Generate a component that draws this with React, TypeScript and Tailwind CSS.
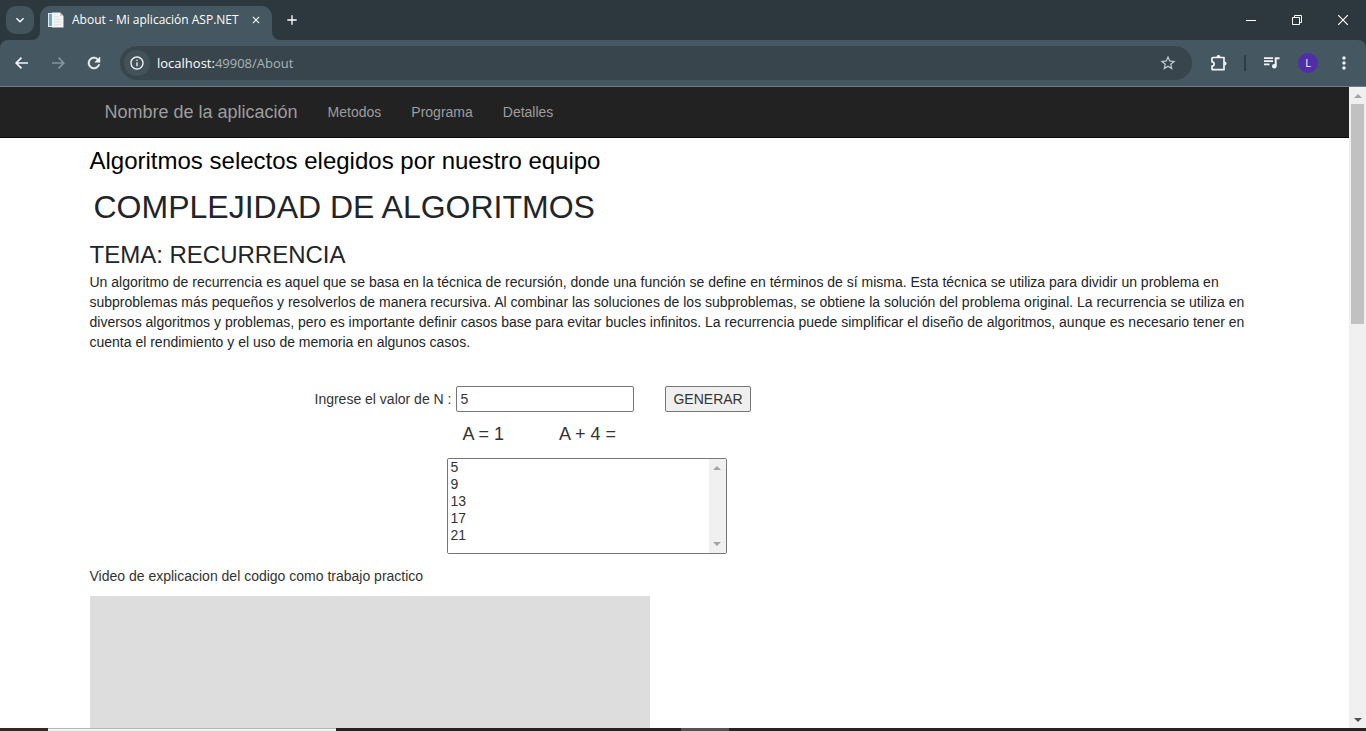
import { useState } from "react";
import { MdAdd, MdClose, MdInfoOutline, MdKeyboardArrowDown, MdMoreVert, MdStarBorder } from "react-icons/md";

function PageIcon() {
  return (
    <svg width="16" height="16" viewBox="0 0 16 16" aria-hidden="true">
      <rect x="0" y="1" width="9" height="14" fill="#dfeaf0" />
      <rect x="1" y="2" width="3" height="12" fill="#6ea9c4" />
      <path d="M4 0.5h8l3.5 3.5v11.5H4z" fill="#f4f4f2" />
      <path d="M12 0.5v3.500h3.500z" fill="#c9cdd0" />
      <path d="M6 5h5M6 7.500h7M6 10h7M6 12.500h7" stroke="#dde2e4" strokeWidth="1" />
    </svg>
  );
}

function HistoryArrow({ forward }: { forward?: boolean }) {
  return (
    <svg width="16" height="16" viewBox="0 0 16 16" fill="none" stroke="currentColor" strokeWidth="1.700" aria-hidden="true">
      <path d={forward ? "M2 8h11.500M8.500 2.700L13.800 8L8.500 13.300" : "M14 8H2.500M7.500 2.700L2.200 8L7.500 13.300"} />
    </svg>
  );
}

function ReloadIcon() {
  return (
    <svg width="18" height="18" viewBox="0 0 24 24" fill="currentColor" aria-hidden="true">
      <path
        d="M17.650 6.350A7.958 7.958 0 0 0 12 4c-4.420 0-7.990 3.580-7.990 8s3.570 8 7.990 8c3.730 0 6.840-2.550 7.730-6h-2.080A5.990 5.990 0 0 1 12 18c-3.310 0-6-2.690-6-6s2.690-6 6-6c1.660 0 3.140.69 4.220 1.780L13 11h7V4l-2.350 2.350z"
        stroke="currentColor"
        strokeWidth="0.600"
      />
    </svg>
  );
}

function ExtensionIcon() {
  return (
    <svg width="18" height="18" viewBox="0 0 18 18" fill="none" aria-hidden="true">
      <path
        d="M2.800 3.500h11.200v12.200H2.800a0.800 0.800 0 0 1-0.800-0.800v-2.900a2.100 2.100 0 0 0 0-4.200V4.300a0.800 0.800 0 0 1 0.800-0.800z"
        stroke="#f1f5f7"
        strokeWidth="1.700"
        strokeLinejoin="round"
      />
      <path d="M6.500 3a2 2 0 0 1 4 0z" fill="#f1f5f7" />
      <path d="M14.500 7.500a2 2 0 0 1 0 4z" fill="#f1f5f7" />
    </svg>
  );
}

function MediaIcon() {
  return (
    <svg width="16" height="14" viewBox="0 0 16 14" fill="none" stroke="#f1f5f7" strokeWidth="1.700" aria-hidden="true">
      <path d="M0 2.200h9M0 5.200h9M0 8.300h5.500" />
      <path d="M11.700 10V2.200H15.500" strokeWidth="2" />
      <circle cx="10.300" cy="10.200" r="2.300" fill="#f1f5f7" stroke="none" />
    </svg>
  );
}

function Arrow({ up, color }: { up?: boolean; color: string }) {
  return (
    <svg width="8" height="4" viewBox="0 0 8 4" aria-hidden="true">
      <path d={up ? "M0 4L4 0L8 4z" : "M0 0L4 4L8 0z"} fill={color} />
    </svg>
  );
}

function TabStrip() {
  return (
    <div className="flex h-10 shrink-0 items-end bg-[#2d383e]">
      <button
        aria-label="Buscar pestañas"
        className="mb-1.5 ml-1.5 flex size-7 items-center justify-center rounded-[10px] bg-[#43545d] text-white"
      >
        <MdKeyboardArrowDown size={16} />
      </button>
      <div className="relative ml-1.5 flex h-[34px] w-58 items-center rounded-t-[10px] bg-[#455760] px-2 pb-1.5">
        <svg className="absolute bottom-0 -left-2" width="8" height="8" viewBox="0 0 8 8" aria-hidden="true">
          <path d="M8 0v8H0a8 8 0 0 0 8-8z" fill="#455760" />
        </svg>
        <svg className="absolute -right-2 bottom-0" width="8" height="8" viewBox="0 0 8 8" aria-hidden="true">
          <path d="M0 0v8h8a8 8 0 0 1-8-8z" fill="#455760" />
        </svg>
        <PageIcon />
        <span className="ml-2 flex-1 truncate text-xs text-white">About - Mi aplicación ASP.NET</span>
        <button aria-label="Cerrar pestaña" className="flex size-4 items-center justify-center text-white">
          <MdClose size={12} />
        </button>
      </div>
      <button aria-label="Nueva pestaña" className="mb-2.5 ml-3 flex h-5 items-center text-white">
        <MdAdd size={16} />
      </button>
      <div className="ml-auto flex h-full items-center text-white">
        <button aria-label="Minimizar" className="flex w-[46px] justify-center">
          <svg width="10" height="10" viewBox="0 0 10 10" stroke="currentColor">
            <path d="M0 5.500h10" />
          </svg>
        </button>
        <button aria-label="Restaurar" className="flex w-[46px] justify-center">
          <svg width="10" height="10" viewBox="0 0 10 10" fill="none" stroke="currentColor">
            <path d="M0.500 2.500h7v7h-7zM2.500 2.500v-2h7v7h-2" />
          </svg>
        </button>
        <button aria-label="Cerrar" className="flex w-[46px] justify-center">
          <svg width="10" height="10" viewBox="0 0 10 10" stroke="currentColor" strokeWidth="1.200">
            <path d="M0 0l10 10M10 0L0 10" />
          </svg>
        </button>
      </div>
    </div>
  );
}

function Toolbar() {
  return (
    <div className="shrink-0 bg-[#2d383e]">
      <div className="flex h-[47px] items-center rounded-t-lg border-b border-[#6f7d84] bg-[#455760] pr-3 pl-3.5 text-[#f1f5f7]">
        <button aria-label="Atrás">
          <HistoryArrow />
        </button>
        <button aria-label="Adelante" className="ml-5 text-[#87949b]">
          <HistoryArrow forward />
        </button>
        <button aria-label="Recargar" className="ml-[19px]">
          <ReloadIcon />
        </button>
        <div className="ml-[17px] flex h-[34px] flex-1 items-center rounded-full bg-[#38454c] pr-[15px] pl-1">
          <button
            aria-label="Información del sitio"
            className="flex size-[26px] items-center justify-center rounded-full bg-[#43525a]"
          >
            <MdInfoOutline size={16} />
          </button>
          <span className="ml-[7px] flex-1 text-[13px] leading-5 text-[#a9b4b9]">
            <span className="text-white">localhost:</span>49908/About
          </span>
          <button aria-label="Añadir a marcadores" className="text-[#c5cfd4]">
            <MdStarBorder size={18} />
          </button>
        </div>
        <button aria-label="Extensiones" className="ml-[18px]">
          <ExtensionIcon />
        </button>
        <span className="ml-4 h-4 w-0.5 bg-[#2f3d45]" />
        <button aria-label="Contenido multimedia" className="ml-[18px]">
          <MediaIcon />
        </button>
        <button
          aria-label="Perfil"
          className="ml-[18px] flex size-5 items-center justify-center rounded-full bg-[#512da8] text-[11px] text-white"
        >
          L
        </button>
        <button aria-label="Menú" className="ml-4">
          <MdMoreVert size={20} />
        </button>
      </div>
    </div>
  );
}

function NavBar() {
  return (
    <nav className="h-[51px] border-b border-[#080808] bg-[#222222]">
      <div className="mx-auto flex h-[50px] max-w-[1170px] items-center px-[15px] text-[#9d9d9d]">
        <a href="#inicio" className="text-lg">
          Nombre de la aplicación
        </a>
        <div className="ml-[30px] flex gap-[30px] text-sm">
          <a href="#metodos">Metodos</a>
          <a href="#programa">Programa</a>
          <a href="#detalles">Detalles</a>
        </div>
      </div>
    </nav>
  );
}

const STEP = 4;

function Recurrence() {
  const [n, setN] = useState("5");
  const [values, setValues] = useState([5, 9, 13, 17, 21]);

  const generate = () => {
    const count = Math.max(0, Math.min(100, parseInt(n, 10) || 0));
    setValues(Array.from({ length: count }, (_, i) => 1 + STEP * (i + 1)));
  };

  return (
    <section className="mt-[34px]">
      <div className="flex h-[26px] items-center pl-[225px]">
        <label htmlFor="n">Ingrese el valor de N :</label>
        <input
          id="n"
          value={n}
          onChange={(e) => setN(e.target.value)}
          className="ml-[5px] h-full w-[178px] rounded-xs border border-[#767676] bg-white px-[3px]"
        />
        <button
          onClick={generate}
          className="ml-[31px] h-full rounded-xs border border-[#767676] bg-[#efefef] px-[7px]"
        >
          GENERAR
        </button>
      </div>
      <div className="mt-3 flex gap-[55px] pl-[373px] text-lg leading-5">
        <span>A = 1</span>
        <span>A + 4 =</span>
      </div>
      <div className="mt-3.5 ml-[357px] flex h-24 w-70 overflow-hidden rounded-xs border border-[#767676] bg-white">
        <select
          aria-label="Resultados"
          size={5}
          className="h-full flex-1 [scrollbar-width:none] bg-white outline-none"
        >
          {values.map((v) => (
            <option key={v} className="h-[17px] min-h-[17px] px-[3px] py-0 leading-[17px]">
              {v}
            </option>
          ))}
        </select>
        <div className="flex w-[17px] flex-col items-center justify-between bg-[#f0f0f0] py-[7px]">
          <Arrow up color="#a3a3a3" />
          <Arrow color="#a3a3a3" />
        </div>
      </div>
    </section>
  );
}

function Page() {
  return (
    <div className="min-w-0 flex-1 overflow-hidden bg-white font-['Liberation_Sans',Arial,sans-serif] text-sm text-[#333333]">
      <NavBar />
      <main className="mx-auto max-w-[1170px]">
        <h2 className="pt-2 text-2xl leading-[30px] text-black">Algoritmos selectos elegidos por nuestro equipo</h2>
        <h1 className="mt-[11px] pl-1 text-[32px] leading-10 text-[#212529]">COMPLEJIDAD DE ALGORITMOS</h1>
        <h3 className="mt-3.5 text-2xl leading-7 text-[#212529]">TEMA: RECURRENCIA</h3>
        <p className="mt-[3px] leading-5 text-[#212529]">
          Un algoritmo de recurrencia es aquel que se basa en la técnica de recursión, donde una función se define en
          términos de sí misma. Esta técnica se utiliza para dividir un problema en subproblemas más pequeños y
          resolverlos de manera recursiva. Al combinar las soluciones de los subproblemas, se obtiene la solución del
          problema original. La recurrencia se utiliza en diversos algoritmos y problemas, pero es importante definir
          casos base para evitar bucles infinitos. La recurrencia puede simplificar el diseño de algoritmos, aunque es
          necesario tener en cuenta el rendimiento y el uso de memoria en algunos casos.
        </p>
        <Recurrence />
        <p className="mt-3 leading-5">Video de explicacion del codigo como trabajo practico</p>
        <div className="mt-2.5 h-[315px] w-[560px] bg-[#dddddd]" />
      </main>
    </div>
  );
}

function ScrollBar() {
  return (
    <div className="flex w-[17px] shrink-0 flex-col items-center bg-[#f0f0f0]">
      <div className="flex h-[17px] items-center">
        <Arrow up color="#a3a3a3" />
      </div>
      <div className="h-55 w-[13px] bg-[#c1c1c1]" />
      <div className="mt-auto flex h-[17px] items-center">
        <Arrow color="#505050" />
      </div>
    </div>
  );
}

export default function App() {
  return (
    <div className="flex h-screen flex-col overflow-hidden font-['Open_Sans','Noto_Sans',sans-serif]">
      <TabStrip />
      <Toolbar />
      <div className="flex min-h-0 flex-1">
        <Page />
        <ScrollBar />
      </div>
      <div className="flex h-[3px] shrink-0 bg-[#2b1f21]">
        <div className="w-12 bg-[#3a2424]" />
        <div className="w-72 border-t border-[#b5b5b5] bg-[#f3f3f3]" />
        <div className="ml-[345px] w-12 bg-[#5a5051]" />
      </div>
    </div>
  );
}
